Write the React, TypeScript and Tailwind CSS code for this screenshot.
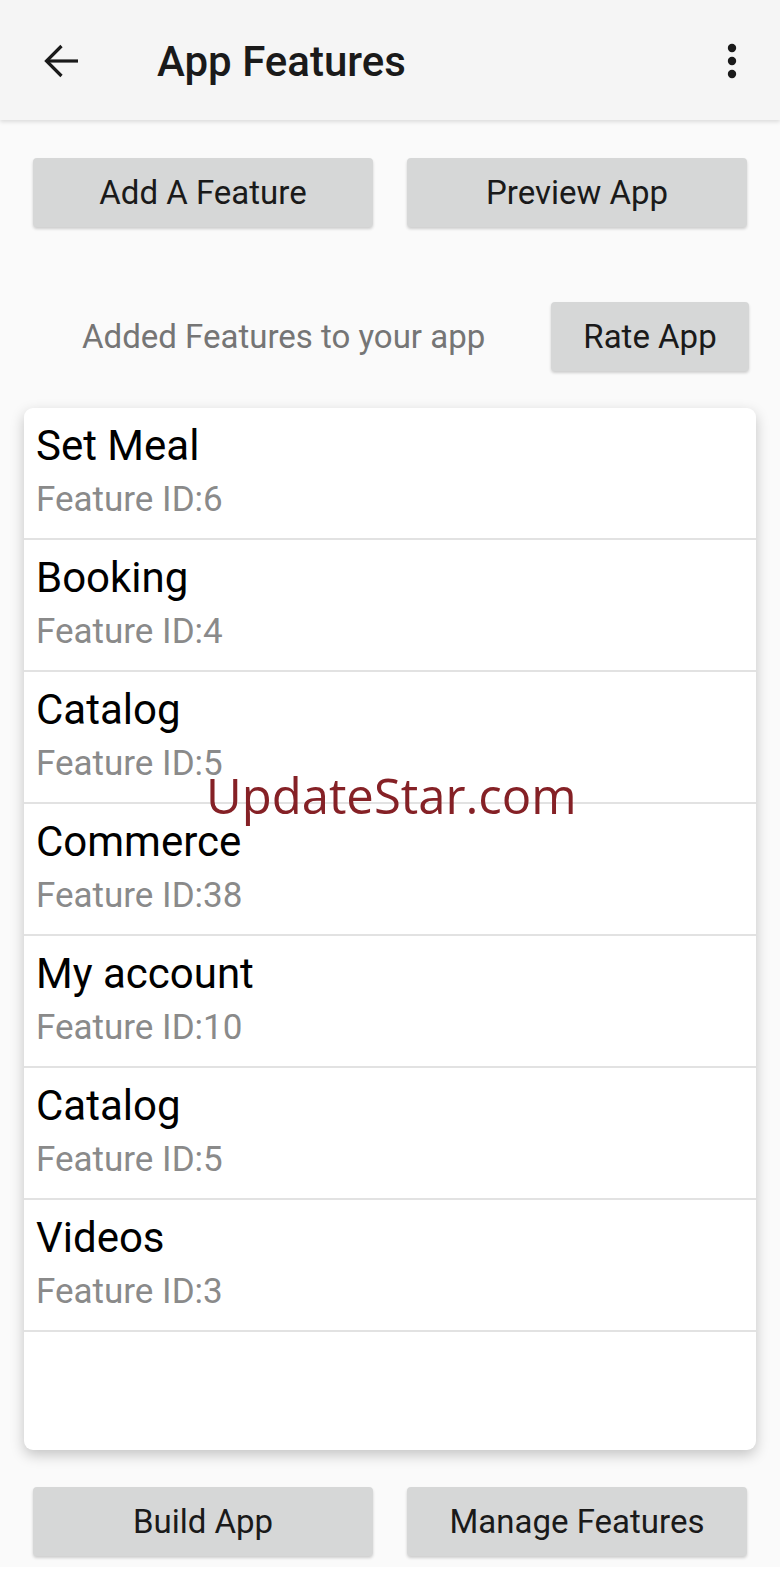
import React from "react"

const features = [
  { name: "Set Meal", id: 6 },
  { name: "Booking", id: 4 },
  { name: "Catalog", id: 5 },
  { name: "Commerce", id: 38 },
  { name: "My account", id: 10 },
  { name: "Catalog", id: 5 },
  { name: "Videos", id: 3 },
]

function GreyButton({ label, className = "" }: { label: string; className?: string }) {
  return (
    <button
      className={`flex h-[69px] items-center justify-center rounded-[4px] bg-[#d6d7d7] text-[33px] text-[#1a1a1a] shadow-[0_2px_3px_rgba(0,0,0,0.18)] ${className}`}
    >
      {label}
    </button>
  )
}

export default function App() {
  return (
    <div className="relative flex min-h-[1583px] flex-col bg-[#fafafa] font-['Roboto',sans-serif]">
      <header className="z-10 flex h-[120px] items-center bg-[#f5f5f5] shadow-[0_2px_4px_rgba(0,0,0,0.12)]">
        <svg className="ml-[44px] mt-[2px] h-[34px] w-[34px]" viewBox="0 0 34 34" fill="none" stroke="#1a1a1a" strokeWidth="3.2">
          <path d="M34 17H2.5" />
          <path d="M17.5 2L2.5 17L17.5 32" />
        </svg>
        <h1 className="ml-[79px] mt-[4px] text-[42px] font-medium leading-none text-[#1a1a1a]">App Features</h1>
        <svg className="ml-auto mr-[43px] mt-[2px] h-[36px] w-[10px]" viewBox="0 0 10 36" fill="#1a1a1a">
          <circle cx="5" cy="5" r="4.2" />
          <circle cx="5" cy="18" r="4.2" />
          <circle cx="5" cy="31" r="4.2" />
        </svg>
      </header>

      <div className="grid grid-cols-2 gap-[34px] px-[33px] pt-[38px]">
        <GreyButton label="Add A Feature" />
        <GreyButton label="Preview App" />
      </div>

      <div className="mt-[75px] flex items-center pl-[82px] pr-[31px]">
        <span className="text-[33px] text-[#757575]">Added Features to your app</span>
        <GreyButton label="Rate App" className="ml-auto w-[198px]" />
      </div>

      <div className="mx-[24px] mt-[37px] flex h-[1042px] flex-col overflow-hidden rounded-[9px] bg-white shadow-[0_5px_14px_rgba(0,0,0,0.22)]">
        {features.map((f, i) => (
          <div key={i} className="flex h-[132px] flex-col border-b-2 border-[#e2e2e2] pl-[12px]">
            <span className="mt-[13px] text-[42px] leading-[50px] text-black">{f.name}</span>
            <span className="mt-[8px] text-[35px] leading-[42px] text-[#8a8a8a]">Feature ID:{f.id}</span>
          </div>
        ))}
      </div>

      <div className="grid grid-cols-2 gap-[34px] px-[33px] pt-[37px]">
        <GreyButton label="Build App" />
        <GreyButton label="Manage Features" />
      </div>

      <div className="mt-auto h-[16px] bg-white" />

      <div className="pointer-events-none absolute left-[206px] top-[771px] font-['Open_Sans',sans-serif] text-[49px] leading-none text-[#852126]">
        UpdateStar.com
      </div>
    </div>
  )
}
